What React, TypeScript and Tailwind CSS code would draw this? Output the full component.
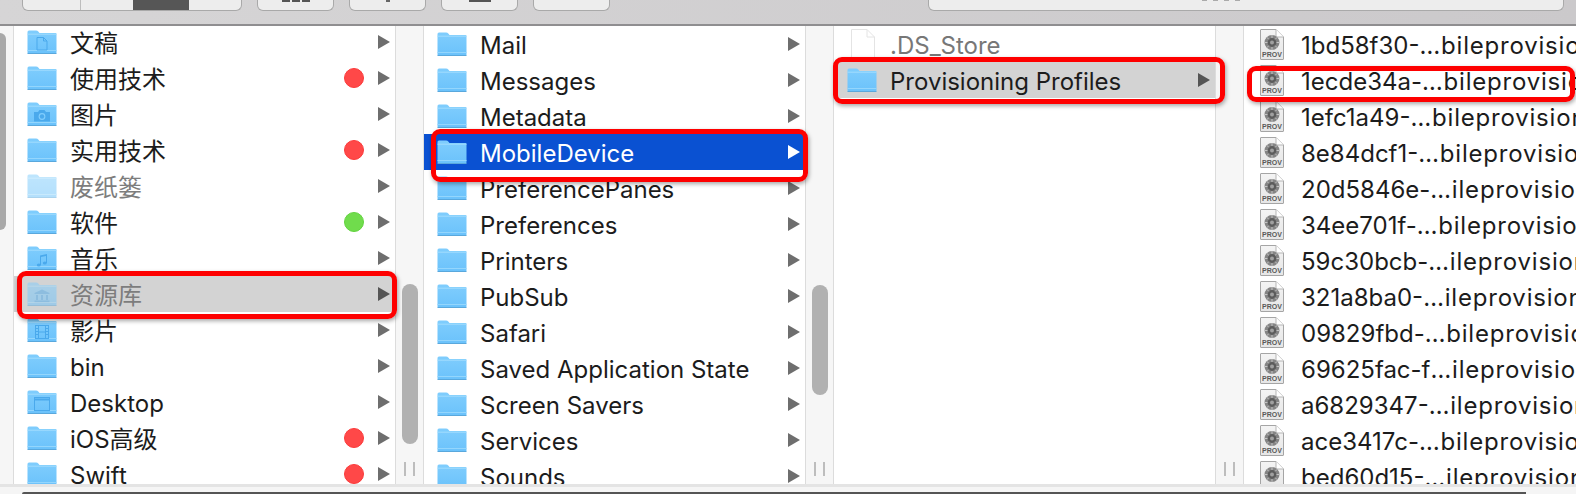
import React, { useId } from "react";

type Badge = "doc" | "camera" | "music" | "library" | "film" | "window" | null;

function Folder({ badge = null, dim = false }: { badge?: Badge; dim?: boolean }) {
  const id = useId();
  const s = "#4aa9ec";
  return (
    <svg width="30" height="24" viewBox="0 0 30 24" className={dim ? "shrink-0 opacity-50" : "shrink-0"}>
      <defs>
        <linearGradient id={id} x1="0" y1="0" x2="0" y2="1">
          <stop offset="0" stopColor="#80cdfd" />
          <stop offset="1" stopColor="#6bc2fb" />
        </linearGradient>
      </defs>
      <path d="M0.5 2 Q0.5 0.5 2 0.5 H9 Q10.5 0.5 11.5 1.8 L12.5 3 H28.5 Q29.5 3 29.5 4 V22.5 Q29.5 23.5 28.5 23.5 H1.5 Q0.5 23.5 0.5 22.5 Z" fill={`url(#${id})`} />
      <path d="M0.5 4.2 H29.5" stroke="#a2ddfe" strokeWidth="1" />
      <path d="M0.5 20.5 H29.5" stroke="#94d6fd" strokeWidth="1" />
      <path d="M0.5 23.5 H29.5" stroke="#5aa8dc" strokeWidth="1" />
      {badge === "doc" && <path d="M10 7.5 H16.5 L20 11 V20 H10 Z M16.5 7.5 V11 H20" fill="none" stroke={s} strokeWidth="1" />}
      {badge === "camera" && (
        <g fill={s}>
          <path d="M7 10 H11 L12.5 8 H17.5 L19 10 H23 V19.5 H7 Z" />
          <circle cx="15" cy="14.5" r="3.4" fill="#80cdfd" />
          <circle cx="15" cy="14.5" r="2.2" fill={s} />
        </g>
      )}
      {badge === "music" && (
        <g fill={s}>
          <path d="M13 9.5 L20 8 V17 H19 V10 L14 11 V19 H13 Z" />
          <ellipse cx="11.8" cy="19" rx="2" ry="1.5" />
          <ellipse cx="17.8" cy="17" rx="2" ry="1.5" />
        </g>
      )}
      {badge === "library" && (
        <g fill={s}>
          <path d="M15 7.5 L22.5 11 V12 H7.5 V11 Z" />
          <rect x="9" y="13" width="2" height="5" />
          <rect x="14" y="13" width="2" height="5" />
          <rect x="19" y="13" width="2" height="5" />
          <rect x="7.5" y="18.5" width="15" height="1.6" />
        </g>
      )}
      {badge === "film" && (
        <g fill="none" stroke={s}>
          <rect x="8.5" y="7.5" width="13" height="13" />
          <path d="M11.5 7.5 V20.5 M18.5 7.5 V20.5 M8.5 10.5 H11.5 M8.5 13.5 H11.5 M8.5 16.5 H11.5 M18.5 10.5 H21.5 M18.5 13.5 H21.5 M18.5 16.5 H21.5 M11.5 14 H18.5" />
        </g>
      )}
      {badge === "window" && (
        <g fill="none" stroke={s}>
          <rect x="7.5" y="7.5" width="15" height="13" />
          <path d="M7.5 9.5 H22.5" strokeWidth="2" />
        </g>
      )}
    </svg>
  );
}

function Arrow({ white = false, dark = false }: { white?: boolean; dark?: boolean }) {
  return (
    <svg width="12" height="14" viewBox="0 0 12 14" className="shrink-0">
      <path d="M0 0 L12 7 L0 14 Z" fill={white ? "#ffffff" : dark ? "#555555" : "#6e6e6e"} />
    </svg>
  );
}

function Tag({ color }: { color: "red" | "green" }) {
  return (
    <span
      className={
        color === "red"
          ? "w-5 h-5 rounded-full bg-[#ff4848] border border-[#fb3a3a] shrink-0"
          : "w-5 h-5 rounded-full bg-[#70dc4c] border border-[#62d33f] shrink-0"
      }
    />
  );
}

type RowData = {
  name: string;
  badge?: Badge;
  tag?: "red" | "green";
  dim?: boolean;
  sel?: "gray" | "blue";
};

function Row({ r }: { r: RowData }) {
  const bg = r.sel === "gray" ? "bg-[#d3d3d3]" : r.sel === "blue" ? "bg-[#0a51d2]" : "";
  const fg = r.sel === "blue" ? "text-white" : r.dim ? "text-[#7d7d7d]" : "text-[#1c1c1c]";
  return (
    <div className={`h-9 flex items-center pl-[13px] pr-[5px] shrink-0 ${bg}`}>
      <Folder badge={r.badge ?? null} dim={r.dim} />
      <span className={`ml-[13px] flex-1 whitespace-nowrap pt-1 ${fg}`}>{r.name}</span>
      {r.tag && <Tag color={r.tag} />}
      <span className="ml-[14px] flex">
        <Arrow white={r.sel === "blue"} dark={r.sel === "gray"} />
      </span>
    </div>
  );
}

function Gutter({ thumbTop, thumbH }: { thumbTop: string; thumbH: string }) {
  return (
    <div className="w-[27px] shrink-0 bg-[#f6f6f6] flex flex-col items-center">
      <div className={`w-4 rounded-lg bg-[#b1b1b1] ${thumbTop} ${thumbH}`} />
      <div className="flex-1" />
      <div className="flex gap-[7px] mb-2">
        <span className="w-[2px] h-[14px] bg-[#bdbdbd]" />
        <span className="w-[2px] h-[14px] bg-[#bdbdbd]" />
      </div>
    </div>
  );
}

function ProvIcon() {
  const id = useId();
  return (
    <svg width="24" height="31" viewBox="0 0 24 31" className="shrink-0">
      <defs>
        <linearGradient id={id} x1="0" y1="0" x2="0" y2="1">
          <stop offset="0" stopColor="#f4f4f4" />
          <stop offset="1" stopColor="#e6e6e6" />
        </linearGradient>
      </defs>
      <path d="M0.5 1 Q0.5 0.5 1 0.5 H16 L23.5 8 V30 Q23.5 30.5 23 30.5 H1 Q0.5 30.5 0.5 30 Z" fill={`url(#${id})`} stroke="#a5a5a5" />
      <path d="M16 0.5 V8 H23.5" fill="#ffffff" stroke="#b5b5b5" />
      <circle cx="12" cy="13.5" r="7.5" fill="#858585" />
      <circle cx="12" cy="13.5" r="4.4" fill="#5c5c5c" />
      <circle cx="12" cy="13.5" r="2" fill="#a0a0a0" />
      <path d="M12 6 V9 M12 18 V21 M4.5 13.5 H7.5 M16.5 13.5 H19.5 M6.7 8.2 L8.8 10.3 M15.2 16.7 L17.3 18.8 M17.3 8.2 L15.2 10.3 M8.8 16.7 L6.7 18.8" stroke="#c4c4c4" strokeWidth="1" />
      <text x="12" y="28" textAnchor="middle" fontSize="7" fontWeight="700" fill="#5a5a5a" fontFamily="Liberation Sans, sans-serif">PROV</text>
    </svg>
  );
}

function BlankDoc() {
  return (
    <svg width="24" height="31" viewBox="0 0 24 31" className="shrink-0">
      <path d="M0.5 0.5 H16 L23.5 8 V30.5 H0.5 Z" fill="#ffffff" stroke="#e4e4e4" />
      <path d="M16 0.5 V8 H23.5" fill="none" stroke="#e4e4e4" />
    </svg>
  );
}

function Annotation({ className }: { className: string }) {
  return (
    <div
      className={`absolute border-[5px] border-[#fe0000] rounded-[9px] shadow-[1px_2px_4px_rgba(0,0,0,0.35)] pointer-events-none ${className}`}
    />
  );
}

const col1: RowData[] = [
  { name: "文稿", badge: "doc" },
  { name: "使用技术", tag: "red" },
  { name: "图片", badge: "camera" },
  { name: "实用技术", tag: "red" },
  { name: "废纸篓", dim: true },
  { name: "软件", tag: "green" },
  { name: "音乐", badge: "music" },
  { name: "资源库", badge: "library", dim: true, sel: "gray" },
  { name: "影片", badge: "film" },
  { name: "bin" },
  { name: "Desktop", badge: "window" },
  { name: "iOS高级", tag: "red" },
  { name: "Swift", tag: "red" },
];

const col2: RowData[] = [
  { name: "Mail" },
  { name: "Messages" },
  { name: "Metadata" },
  { name: "MobileDevice", sel: "blue" },
  { name: "PreferencePanes" },
  { name: "Preferences" },
  { name: "Printers" },
  { name: "PubSub" },
  { name: "Safari" },
  { name: "Saved Application State" },
  { name: "Screen Savers" },
  { name: "Services" },
  { name: "Sounds" },
];

const files: [string, string][] = [
  ["1bd58f30-", "…bileprovision"],
  ["1ecde34a-", "…bileprovision"],
  ["1efc1a49-", "…bileprovision"],
  ["8e84dcf1-", "…bileprovision"],
  ["20d5846e-", "…ileprovision"],
  ["34ee701f-", "…bileprovision"],
  ["59c30bcb-", "…ileprovision"],
  ["321a8ba0-", "…ileprovision"],
  ["09829fbd-", "…bileprovision"],
  ["69625fac-f", "…ileprovision"],
  ["a6829347-", "…ileprovision"],
  ["ace3417c-", "…bileprovision"],
  ["bed60d15-", "…ileprovision"],
];

const btn = "h-[11px] bg-[#ededed] border-b border-x border-[#a9a9a9] rounded-b-[6px]";

export default function App() {
  return (
    <div className="relative w-[1576px] h-[494px] overflow-hidden bg-[#f5f5f5] text-[24px] leading-9 font-['Inter','Noto_Sans_CJK_SC',sans-serif]">
      {/* toolbar */}
      <div className="h-[26px] bg-gradient-to-r from-[#d6d5d6] to-[#cbc9cb] border-b-2 border-[#8f8e90] flex items-start pl-[22px]">
        <div className={`${btn} w-[220px] flex overflow-hidden`}>
          <div className="w-[58px] border-r border-[#bdbdbd]" />
          <div className="w-[52px]" />
          <div className="w-[56px] bg-[#565656]" />
        </div>
        <div className={`${btn} w-[77px] ml-[15px] flex justify-center gap-[2px]`}>
          <span className="w-[8px] h-[2px] bg-[#555]" />
          <span className="w-[8px] h-[2px] bg-[#555]" />
          <span className="w-[8px] h-[2px] bg-[#555]" />
        </div>
        <div className={`${btn} w-[77px] ml-[15px] flex justify-center`}>
          <span className="w-[4px] h-[2px] bg-[#666]" />
        </div>
        <div className={`${btn} w-[77px] ml-[15px] flex justify-center`}>
          <span className="w-[22px] h-[2px] bg-[#555]" />
        </div>
        <div className={`${btn} w-[77px] ml-[15px]`} />
        <div className={`${btn} w-[636px] ml-[318px] flex justify-center gap-[6px] pr-[50px]`}>
          <span className="w-[5px] h-[1px] bg-[#aaa]" />
          <span className="w-[5px] h-[1px] bg-[#aaa]" />
          <span className="w-[5px] h-[1px] bg-[#aaa]" />
          <span className="w-[5px] h-[1px] bg-[#aaa]" />
        </div>
      </div>

      {/* browser columns */}
      <div className="h-[458px] flex overflow-hidden">
        <div className="w-[13px] shrink-0 bg-[#f6f6f6]">
          <div className="w-[6px] h-[197px] mt-[7px] rounded-r-md bg-[#a9a9a9]" />
        </div>

        <div className="w-[383px] shrink-0 bg-white border-x border-[#dcdcdc] flex flex-col overflow-hidden">
          <div className="-mt-[2px] flex flex-col">
            {col1.map((r) => (
              <Row key={r.name} r={r} />
            ))}
          </div>
        </div>
        <Gutter thumbTop="mt-[258px]" thumbH="h-[160px]" />

        <div className="w-[383px] shrink-0 bg-white border-x border-[#dcdcdc] flex flex-col overflow-hidden">
          {col2.map((r) => (
            <Row key={r.name} r={r} />
          ))}
        </div>
        <Gutter thumbTop="mt-[259px]" thumbH="h-[110px]" />

        <div className="w-[383px] shrink-0 bg-white border-x border-[#dcdcdc] flex flex-col overflow-hidden">
          <div className="h-9 flex items-center pl-[17px] shrink-0 text-[#777777]">
            <BlankDoc />
            <span className="ml-[15px] whitespace-nowrap pt-1">.DS_Store</span>
          </div>
          <Row r={{ name: "Provisioning Profiles", sel: "gray" }} />
        </div>
        <div className="w-[27px] shrink-0 bg-[#f6f6f6] flex flex-col justify-end items-center">
          <div className="flex gap-[7px] mb-2">
            <span className="w-[2px] h-[14px] bg-[#bdbdbd]" />
            <span className="w-[2px] h-[14px] bg-[#bdbdbd]" />
          </div>
        </div>

        <div className="flex-1 min-w-0 bg-white border-l border-[#dcdcdc] flex flex-col overflow-hidden">
          {files.map(([head, tail]) => (
            <div key={head} className="h-9 flex items-center pl-4 shrink-0 text-[#1c1c1c]">
              <ProvIcon />
              <span className="ml-[17px] whitespace-nowrap pt-1">
                {head}
                <span className="tracking-[0.8px]">{tail}</span>
              </span>
            </div>
          ))}
        </div>
      </div>

      {/* bottom */}
      <div className="h-[10px] border-t-[3px] border-[#e4e4e4] bg-[#f5f5f5] flex flex-col justify-end pl-[22px] pr-[50px]">
        <div className="h-[2px] bg-[#555555] rounded-tl-[3px]" />
      </div>

      {/* red annotations drawn over the screenshot */}
      <Annotation className="left-[17px] top-[271px] w-[380px] h-[48px]" />
      <Annotation className="left-[431px] top-[129px] w-[377px] h-[53px]" />
      <Annotation className="left-[833px] top-[57px] w-[392px] h-[47px]" />
      <Annotation className="left-[1247px] top-[66px] w-[328px] h-[36px]" />
    </div>
  );
}
